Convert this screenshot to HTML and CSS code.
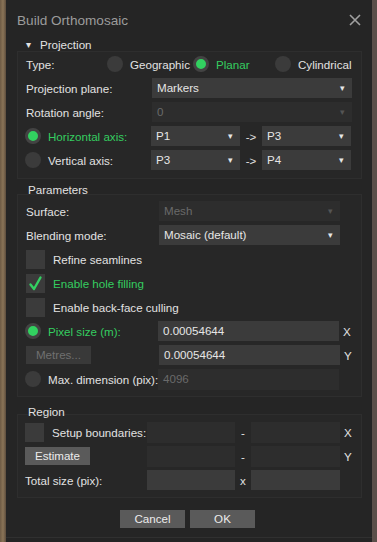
FILE: index.html
```html
<!DOCTYPE html>
<html>
<head>
    <title>Build Orthomosaic</title>
    <link rel="stylesheet" href="styles.css">
</head>
<body>
    <div class="dialog">
        <div class="titlebar">
            <span class="title">Build Orthomosaic</span>
            <svg class="close" width="12" height="12" viewBox="0 0 12 12"><path d="M1 1L11 11M11 1L1 11" stroke="#a0a0a0" stroke-width="1.6"/></svg>
        </div>

        <!-- Projection -->
        <div class="section-head"><span class="caret">&#9662;</span>Projection</div>
        <div class="box proj">
            <div class="row">
                <span class="lbl type-lbl">Type:</span>
                <span class="opt w86"><span class="radio"></span>Geographic</span>
                <span class="opt w82 on"><span class="radio checked"></span>Planar</span>
                <span class="opt"><span class="radio"></span>Cylindrical</span>
            </div>
            <div class="row">
                <span class="lbl wide">Projection plane:</span>
                <div class="combo w200">Markers<span class="arr">&#9662;</span></div>
            </div>
            <div class="row">
                <span class="lbl wide">Rotation angle:</span>
                <div class="combo w200 disabled">0<span class="arr">&#9662;</span></div>
            </div>
            <div class="row">
                <span class="lbl wide opt on"><span class="radio checked"></span>Horizontal axis:</span>
                <div class="combo w89">P1<span class="arr">&#9662;</span></div>
                <span class="to">-&gt;</span>
                <div class="combo w89">P3<span class="arr">&#9662;</span></div>
            </div>
            <div class="row">
                <span class="lbl wide opt"><span class="radio"></span>Vertical axis:</span>
                <div class="combo w89">P3<span class="arr">&#9662;</span></div>
                <span class="to">-&gt;</span>
                <div class="combo w89">P4<span class="arr">&#9662;</span></div>
            </div>
        </div>

        <!-- Parameters -->
        <div class="section-head plain">Parameters</div>
        <div class="box params">
            <div class="row">
                <span class="lbl wider">Surface:</span>
                <div class="combo w181 disabled">Mesh<span class="arr">&#9662;</span></div>
            </div>
            <div class="row">
                <span class="lbl wider">Blending mode:</span>
                <div class="combo w181">Mosaic (default)<span class="arr">&#9662;</span></div>
            </div>
            <div class="row">
                <span class="check"></span><span class="ctext">Refine seamlines</span>
            </div>
            <div class="row">
                <span class="check"><svg width="19" height="19" viewBox="0 0 19 19"><path d="M4.5 10.5L8 15L14.5 3.5" fill="none" stroke="#33d062" stroke-width="2.4" stroke-linecap="round" stroke-linejoin="round"/></svg></span><span class="ctext on">Enable hole filling</span>
            </div>
            <div class="row">
                <span class="check"></span><span class="ctext">Enable back-face culling</span>
            </div>
            <div class="row">
                <span class="lbl wider opt on"><span class="radio checked"></span>Pixel size (m):</span>
                <div class="field w181">0.00054644</div>
                <span class="axis">X</span>
            </div>
            <div class="row">
                <span class="lbl wider"><span class="btn small disabled">Metres...</span></span>
                <div class="field w181">0.00054644</div>
                <span class="axis">Y</span>
            </div>
            <div class="row">
                <span class="lbl wider opt"><span class="radio"></span>Max. dimension (pix):</span>
                <div class="field w181 disabled">4096</div>
            </div>
        </div>

        <!-- Region -->
        <div class="section-head plain region-head">Region</div>
        <div class="box region">
            <div class="row">
                <span class="lbl reg"><span class="check"></span><span class="ctext">Setup boundaries:</span></span>
                <div class="field w88 disabled"></div>
                <span class="dash">-</span>
                <div class="field w89 disabled"></div>
                <span class="axis">X</span>
            </div>
            <div class="row">
                <span class="lbl reg"><span class="btn small">Estimate</span></span>
                <div class="field w88 disabled"></div>
                <span class="dash">-</span>
                <div class="field w89 disabled"></div>
                <span class="axis">Y</span>
            </div>
            <div class="row">
                <span class="lbl reg">Total size (pix):</span>
                <div class="field w88"></div>
                <span class="dash">x</span>
                <div class="field w89"></div>
            </div>
        </div>

        <div class="buttons">
            <span class="btn">Cancel</span>
            <span class="btn">OK</span>
        </div>
    </div>
</body>
</html>
```

FILE: styles.css
```css
body {
    margin: 0;
    height: 542px;
    overflow: hidden;
    background: linear-gradient(90deg, #6e5b45 0, #8a7457 3px, #5d4d3d 6px, #242424 6px, #242424 372px, #5b4f4a 372px);
    font-family: "Liberation Sans", Arial, sans-serif;
    font-size: 11.6px;
    color: #e2e2e2;
    white-space: nowrap;
}
.dialog {
    margin-left: 6px;
    width: 366px;
    height: 538px;
    background: #252525;
    box-sizing: border-box;
    border-bottom: 1px solid #303030;
}
.titlebar {
    height: 38px;
    display: flex;
    align-items: center;
    padding: 0 11px;
    justify-content: space-between;
}
.title { font-size: 13.6px; color: #9c9c9c; margin-top: 2px; }
.close { margin-top: 2px; }

.section-head {
    height: 13px;
    line-height: 13px;
    padding-left: 20px;
    color: #e2e2e2;
}
.caret { font-size: 10px; margin-right: 9px; vertical-align: 1px; }
.section-head.plain {
    padding-left: 22px;
    margin-top: 3px;
    height: 15px;
    line-height: 15px;
    position: relative;
}
.section-head.region-head { margin-top: 7px; }

.box {
    margin-left: 11px;
    width: 345px;
    box-sizing: border-box;
    border: 1px solid #2e2e2e;
    background: #272727;
    padding: 0 7px 0 8px;
}
.proj { padding-top: 0; padding-bottom: 6px; }
.params { padding-top: 4px; padding-bottom: 5px; margin-top: -3px; }
.region { padding-top: 5px; padding-bottom: 5px; margin-top: -5px; }

.row {
    height: 24px;
    display: flex;
    align-items: center;
}
.lbl { flex: none; display: flex; align-items: center; }
.type-lbl { width: 81px; }
.lbl.wide { width: 126px; }
.lbl.wider { width: 133px; }
.lbl.reg { width: 122px; }

.opt { display: flex; align-items: center; }
.w86 { width: 86px; }
.w82 { width: 82px; }
.opt.on, .ctext.on { color: #35cd60; }
.lbl.opt, .lbl.reg { margin-left: -1px; }

.radio {
    width: 16px;
    height: 16px;
    border-radius: 50%;
    background: #3b3b3b;
    margin-right: 7px;
    box-sizing: border-box;
    flex: none;
}
.radio.checked {
    background: #32d160;
    border: 3px solid #434343;
}

.check {
    width: 19px;
    height: 19px;
    background: #3b3b3b;
    margin-right: 8px;
    flex: none;
    display: inline-block;
}
.check svg { display: block; }

.combo, .field {
    height: 20px;
    line-height: 20px;
    background: #3b3b3b;
    padding-left: 5px;
    box-sizing: border-box;
    position: relative;
    color: #e6e6e6;
    flex: none;
}
.combo.disabled, .field.disabled { background: #2d2d2d; color: #6a6a6a; }
.field.disabled { height: 21px; }
.arr { position: absolute; right: 7px; top: 0; font-size: 9px; }
.combo.disabled .arr { color: #555; }
.w200 { width: 200px; }
.w181 { width: 181px; }
.w89 { width: 89px; }
.w88 { width: 88px; }
.to { width: 22px; text-align: center; }
.dash { width: 16px; text-align: center; }
.axis { margin-left: 4px; }

.btn {
    display: inline-block;
    width: 65px;
    height: 18px;
    line-height: 18px;
    text-align: center;
    background: #5a5a5a;
    color: #ececec;
}
.btn.small.disabled { background: #393939; color: #707070; }

.buttons {
    display: flex;
    justify-content: center;
    gap: 5px;
    margin-top: 12px;
    padding-right: 3px;
}
```
